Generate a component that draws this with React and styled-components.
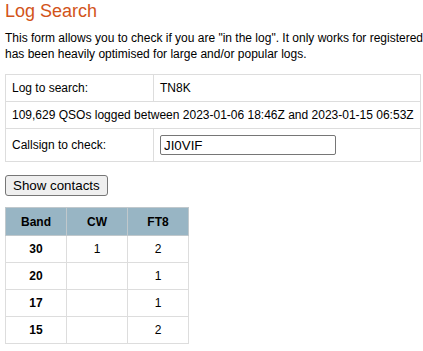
import styled, { createGlobalStyle } from "styled-components";

const GlobalStyle = createGlobalStyle`
  html, body {
    margin: 0;
    padding: 0;
    background: #fff;
    overflow: hidden;
  }
  body {
    font-family: "Liberation Sans", Arial, sans-serif;
    font-size: 12px;
    color: #000;
  }
`;

const Page = styled.div`
  padding: 1px 5px 0;
`;

const Title = styled.h1`
  margin: 0;
  font-size: 18px;
  font-weight: normal;
  line-height: 21px;
  color: #d2541a;
`;

const Intro = styled.p`
  margin: 8px 0 0;
  line-height: 16px;
  white-space: nowrap;
`;

const FormTable = styled.table`
  margin-top: 12px;
  border-collapse: collapse;
  width: 414px;
  & td {
    border: 1px solid #ddd;
    padding: 6px;
    line-height: 14px;
    white-space: nowrap;
  }
`;

const LabelCell = styled.td`
  width: 135px;
`;

const CallInput = styled.input`
  box-sizing: border-box;
  width: 176px;
  height: 20px;
  padding: 0 3px;
  border: 1px solid #767676;
  border-radius: 2px;
  font-family: "Liberation Sans", Arial, sans-serif;
  font-size: 13.33px;
  color: #000;
  vertical-align: middle;
`;

const Button = styled.button`
  display: block;
  margin-top: 13px;
  height: 21px;
  padding: 0 7px;
  background: #efefef;
  border: 1px solid #767676;
  border-radius: 3px;
  font-family: "Liberation Sans", Arial, sans-serif;
  font-size: 13.33px;
  color: #000;
`;

const Results = styled.table`
  margin-top: 11px;
  border-collapse: collapse;
  width: 184px;
  table-layout: fixed;
  & th,
  & td {
    border: 1px solid #ddd;
    text-align: center;
    line-height: 14px;
  }
  & th {
    background: #98b5c4;
    border-color: #c0c8cc;
    font-weight: bold;
    padding: 7px 4px 6px;
  }
  & td {
    padding: 6px 4px;
  }
`;

const BandCell = styled.td`
  font-weight: bold;
`;

const rows = [
  { band: 30, cw: 1, ft8: 2 },
  { band: 20, cw: "", ft8: 1 },
  { band: 17, cw: "", ft8: 1 },
  { band: 15, cw: "", ft8: 2 },
];

export default function App() {
  return (
    <Page>
      <GlobalStyle />
      <Title>Log Search</Title>
      <Intro>
        This form allows you to check if you are "in the log". It only works for registered
        <br />
        has been heavily optimised for large and/or popular logs.
      </Intro>
      <FormTable>
        <tbody>
          <tr>
            <LabelCell>Log to search:</LabelCell>
            <td>TN8K</td>
          </tr>
          <tr>
            <td colSpan={2}>109,629 QSOs logged between 2023-01-06 18:46Z and 2023-01-15 06:53Z</td>
          </tr>
          <tr>
            <LabelCell>Callsign to check:</LabelCell>
            <td>
              <CallInput defaultValue="JI0VIF" />
            </td>
          </tr>
        </tbody>
      </FormTable>
      <Button>Show contacts</Button>
      <Results>
        <thead>
          <tr>
            <th>Band</th>
            <th>CW</th>
            <th>FT8</th>
          </tr>
        </thead>
        <tbody>
          {rows.map((r) => (
            <tr key={r.band}>
              <BandCell>{r.band}</BandCell>
              <td>{r.cw}</td>
              <td>{r.ft8}</td>
            </tr>
          ))}
        </tbody>
      </Results>
    </Page>
  );
}
